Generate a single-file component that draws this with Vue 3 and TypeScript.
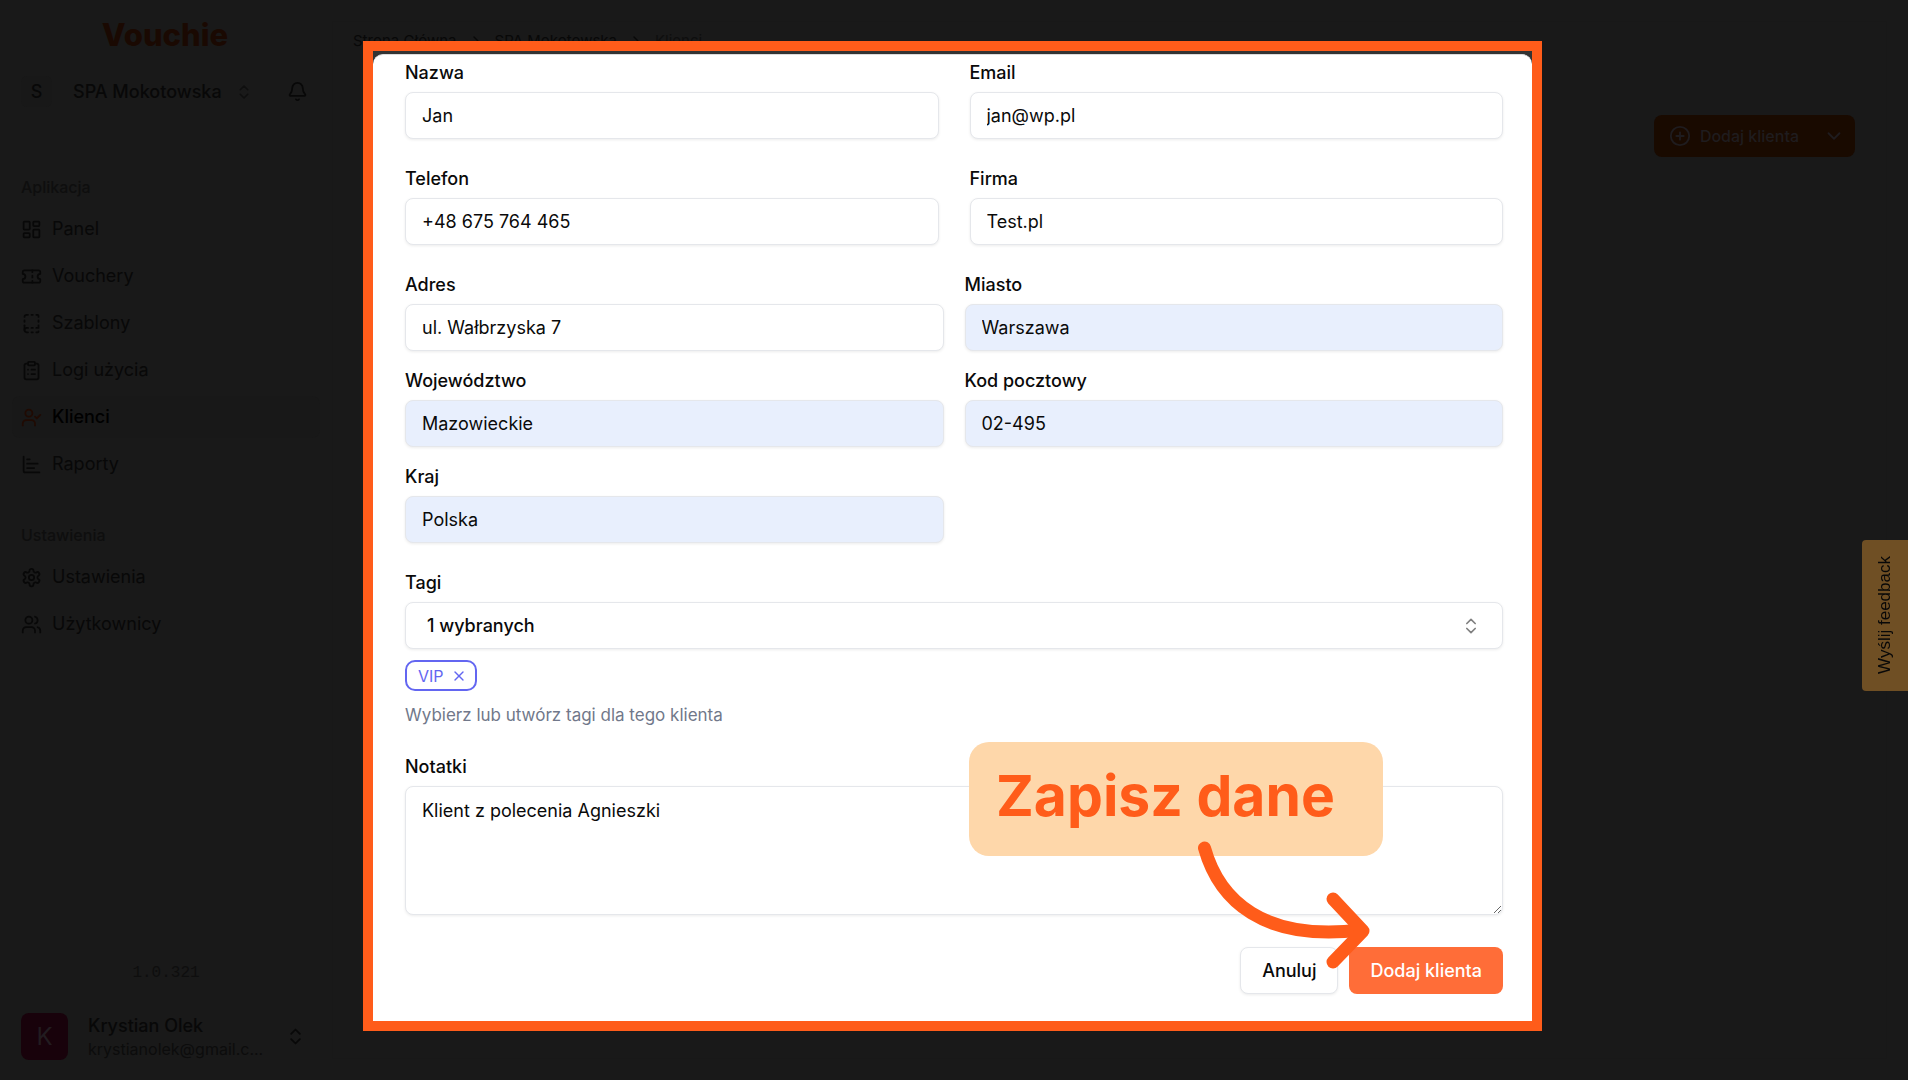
<script setup lang="ts">
import { ref } from 'vue'

interface NavItem {
  label: string
  paths: string[]
  active?: boolean
}

interface Field {
  id: string
  label: string
  value: string
  type?: string
  filled?: boolean
}

const appItems: NavItem[] = [
  {
    label: 'Panel',
    paths: [
      'M4 3h5a1 1 0 0 1 1 1v7a1 1 0 0 1-1 1H4a1 1 0 0 1-1-1V4a1 1 0 0 1 1-1z',
      'M15 3h5a1 1 0 0 1 1 1v3a1 1 0 0 1-1 1h-5a1 1 0 0 1-1-1V4a1 1 0 0 1 1-1z',
      'M15 12h5a1 1 0 0 1 1 1v7a1 1 0 0 1-1 1h-5a1 1 0 0 1-1-1v-7a1 1 0 0 1 1-1z',
      'M4 16h5a1 1 0 0 1 1 1v3a1 1 0 0 1-1 1H4a1 1 0 0 1-1-1v-3a1 1 0 0 1 1-1z',
    ],
  },
  {
    label: 'Vouchery',
    paths: [
      'M2 9a3 3 0 0 1 0 6v2a2 2 0 0 0 2 2h16a2 2 0 0 0 2-2v-2a3 3 0 0 1 0-6V7a2 2 0 0 0-2-2H4a2 2 0 0 0-2 2Z',
      'M13 5v2',
      'M13 17v2',
      'M13 11v2',
    ],
  },
  {
    label: 'Szablony',
    paths: [
      'M12 17h1.5', 'M12 22h1.5', 'M12 2h1.5', 'M17.5 22H19a1 1 0 0 0 1-1',
      'M17.5 2H19a1 1 0 0 1 1 1v1.5', 'M20 14v3h-2.5', 'M20 8.5V10', 'M4 10V8.5',
      'M4 19.5V14', 'M4 4.5A2.5 2.5 0 0 1 6.5 2H8', 'M8 22H6.5a1 1 0 0 1 0-5H8',
    ],
  },
  {
    label: 'Logi użycia',
    paths: [
      'M9 2h6a1 1 0 0 1 1 1v2a1 1 0 0 1-1 1H9a1 1 0 0 1-1-1V3a1 1 0 0 1 1-1z',
      'M16 4h2a2 2 0 0 1 2 2v14a2 2 0 0 1-2 2H6a2 2 0 0 1-2-2V6a2 2 0 0 1 2-2h2',
      'M12 11h4', 'M12 16h4', 'M8 11h.01', 'M8 16h.01',
    ],
  },
  {
    label: 'Klienci',
    active: true,
    paths: [
      'm16 11 2 2 4-4',
      'M16 21v-2a4 4 0 0 0-4-4H6a4 4 0 0 0-4 4v2',
      'M13 7a4 4 0 1 1-8 0a4 4 0 1 1 8 0',
    ],
  },
  {
    label: 'Raporty',
    paths: ['M3 3v16a2 2 0 0 0 2 2h16', 'M7 16h8', 'M7 11h12', 'M7 6h3'],
  },
]

const settingsItems: NavItem[] = [
  {
    label: 'Ustawienia',
    paths: [
      'M12.22 2h-.44a2 2 0 0 0-2 2v.18a2 2 0 0 1-1 1.73l-.43.25a2 2 0 0 1-2 0l-.15-.08a2 2 0 0 0-2.73.73l-.22.38a2 2 0 0 0 .73 2.73l.15.1a2 2 0 0 1 1 1.72v.51a2 2 0 0 1-1 1.74l-.15.09a2 2 0 0 0-.73 2.73l.22.38a2 2 0 0 0 2.73.73l.15-.08a2 2 0 0 1 2 0l.43.25a2 2 0 0 1 1 1.73V20a2 2 0 0 0 2 2h.44a2 2 0 0 0 2-2v-.18a2 2 0 0 1 1-1.73l.43-.25a2 2 0 0 1 2 0l.15.08a2 2 0 0 0 2.73-.73l.22-.39a2 2 0 0 0-.73-2.73l-.15-.08a2 2 0 0 1-1-1.74v-.5a2 2 0 0 1 1-1.74l.15-.09a2 2 0 0 0 .73-2.73l-.22-.38a2 2 0 0 0-2.73-.73l-.15.08a2 2 0 0 1-2 0l-.43-.25a2 2 0 0 1-1-1.73V4a2 2 0 0 0-2-2z',
      'M15 12a3 3 0 1 1-6 0a3 3 0 1 1 6 0',
    ],
  },
  {
    label: 'Użytkownicy',
    paths: [
      'M16 21v-2a4 4 0 0 0-4-4H6a4 4 0 0 0-4 4v2',
      'M13 7a4 4 0 1 1-8 0a4 4 0 1 1 8 0',
      'M22 21v-2a4 4 0 0 0-3-3.87',
      'M16 3.13a4 4 0 0 1 0 7.75',
    ],
  },
]

const groups = [
  { title: 'Aplikacja', items: appItems },
  { title: 'Ustawienia', items: settingsItems },
]

const contactFields = ref<Field[]>([
  { id: 'name', label: 'Nazwa', value: 'Jan' },
  { id: 'email', label: 'Email', value: 'jan@wp.pl', type: 'email' },
  { id: 'phone', label: 'Telefon', value: '+48 675 764 465', type: 'tel' },
  { id: 'company', label: 'Firma', value: 'Test.pl' },
])

const addressFields = ref<Field[]>([
  { id: 'street', label: 'Adres', value: 'ul. Wałbrzyska 7' },
  { id: 'city', label: 'Miasto', value: 'Warszawa', filled: true },
  { id: 'region', label: 'Województwo', value: 'Mazowieckie', filled: true },
  { id: 'postal', label: 'Kod pocztowy', value: '02-495', filled: true },
  { id: 'country', label: 'Kraj', value: 'Polska', filled: true },
])

const notes = ref('Klient z polecenia Agnieszki')
</script>

<template>
  <div class="app">
    <aside class="sidebar">
      <div class="logo">Vouchie</div>
      <div class="workspace">
        <button type="button" class="switcher">
          <span class="tile">S</span>
          <span class="name">SPA Mokotowska</span>
          <svg class="icon faint" width="18" height="18" viewBox="0 0 24 24"><path d="m7 15 5 5 5-5" /><path d="m7 9 5-5 5 5" /></svg>
        </button>
        <button type="button" class="bell" aria-label="Powiadomienia">
          <svg class="icon" width="21" height="21" viewBox="0 0 24 24"><path d="M10.268 21a2 2 0 0 0 3.464 0" /><path d="M3.262 15.326A1 1 0 0 0 4 17h16a1 1 0 0 0 .74-1.673C19.41 13.956 18 12.499 18 8A6 6 0 0 0 6 8c0 4.499-1.411 5.956-2.738 7.326" /></svg>
        </button>
      </div>

      <nav v-for="group in groups" :key="group.title" class="group">
        <h2>{{ group.title }}</h2>
        <a v-for="item in group.items" :key="item.label" href="#" :class="{ active: item.active }">
          <svg class="icon" width="21" height="21" viewBox="0 0 24 24">
            <path v-for="d in item.paths" :key="d" :d="d" />
          </svg>
          <span>{{ item.label }}</span>
        </a>
      </nav>

      <div class="version">1.0.321</div>
      <button type="button" class="account">
        <span class="avatar">K</span>
        <span class="who">
          <span class="person">Krystian Olek</span>
          <span class="mail">krystianolek@gmail.c...</span>
        </span>
        <svg class="icon" width="21" height="21" viewBox="0 0 24 24"><path d="m7 15 5 5 5-5" /><path d="m7 9 5-5 5 5" /></svg>
      </button>
    </aside>

    <main class="main">
      <div class="crumbs">
        <a href="#">Strona Główna</a>
        <svg class="icon" width="16" height="16" viewBox="0 0 24 24"><path d="m9 18 6-6-6-6" /></svg>
        <a href="#">SPA Mokotowska</a>
        <svg class="icon" width="16" height="16" viewBox="0 0 24 24"><path d="m9 18 6-6-6-6" /></svg>
        <span>Klienci</span>
      </div>
      <div class="toolbar">
        <button type="button" class="add">
          <svg class="icon" width="22" height="22" viewBox="0 0 24 24"><circle cx="12" cy="12" r="10" /><path d="M8 12h8" /><path d="M12 8v8" /></svg>
          <span>Dodaj klienta</span>
          <svg class="icon" width="22" height="22" viewBox="0 0 24 24"><path d="m6 9 6 6 6-6" /></svg>
        </button>
      </div>
    </main>

    <button type="button" class="feedback"><span>Wyślij feedback</span></button>

    <div class="overlay">
      <div class="frame">
        <form class="dialog" role="dialog" aria-label="Dodaj klienta" @submit.prevent>
          <div class="grid contact">
            <div v-for="field in contactFields" :key="field.id" class="field">
              <label :for="field.id">{{ field.label }}</label>
              <input :id="field.id" v-model="field.value" class="control" :type="field.type ?? 'text'" />
            </div>
          </div>

          <div class="grid address">
            <div v-for="field in addressFields" :key="field.id" class="field">
              <label :for="field.id">{{ field.label }}</label>
              <input :id="field.id" v-model="field.value" class="control" :class="{ filled: field.filled }" type="text" />
            </div>
          </div>

          <div class="field">
            <label for="tags">Tagi</label>
            <div class="select">
              <select id="tags" class="control">
                <option>1 wybranych</option>
              </select>
              <svg class="icon" width="20" height="20" viewBox="0 0 24 24"><path d="m7 15 5 5 5-5" /><path d="m7 9 5-5 5 5" /></svg>
            </div>
            <div class="tags">
              <button type="button" class="tag">
                VIP
                <svg class="icon" width="16" height="16" viewBox="0 0 24 24"><path d="M18 6 6 18" /><path d="m6 6 12 12" /></svg>
              </button>
            </div>
            <p class="hint">Wybierz lub utwórz tagi dla tego klienta</p>
          </div>

          <div class="field">
            <label for="notes">Notatki</label>
            <textarea id="notes" v-model="notes" class="control" spellcheck="false"></textarea>
          </div>

          <div class="actions">
            <button type="button" class="cancel">Anuluj</button>
            <button type="submit" class="submit">Dodaj klienta</button>
          </div>
        </form>

        <div class="callout">Zapisz dane</div>
        <svg class="arrow" width="180" height="136" viewBox="1194 838 180 136">
          <path d="M1204.5 848C1219 900 1263 942 1361 930" />
          <path d="M1333 899L1363 931L1333 962" />
        </svg>
      </div>
    </div>
  </div>
</template>

<style>
body {
  margin: 0;
  background: #191919;
}
</style>

<style scoped>
.app {
  display: flex;
  min-height: 100vh;
  background: #191919;
  color: #080808;
  font-family: Inter, "Noto Sans", sans-serif;
  font-size: 18px;
  line-height: 24px;
}

.app *,
.app *::before {
  box-sizing: border-box;
}

button,
input,
select,
textarea {
  font: inherit;
  color: inherit;
  margin: 0;
}

button {
  padding: 0;
  border: 0;
  background: none;
  text-align: left;
}

a {
  color: inherit;
  text-decoration: none;
}

.icon {
  flex: none;
  fill: none;
  stroke: currentColor;
  stroke-width: 2;
  stroke-linecap: round;
  stroke-linejoin: round;
}

.sidebar {
  display: flex;
  flex-direction: column;
  flex: none;
  width: 332px;
  padding: 16px 12px 20px;
}

.logo {
  height: 36px;
  padding-right: 2px;
  color: #1a0902;
  font-size: 31px;
  font-weight: 800;
  line-height: 38px;
  text-align: center;
}

.workspace {
  display: flex;
  align-items: center;
  gap: 34px;
  padding: 24px 9px 0;
}

.switcher {
  display: flex;
  align-items: center;
  gap: 21px;
  font-weight: 500;
}

.switcher .icon {
  margin-left: -8px;
}

.faint {
  opacity: 0.6;
}

.tile {
  display: grid;
  place-items: center;
  width: 31px;
  height: 31px;
  border-radius: 6px;
  background: #181818;
}

.bell {
  display: flex;
}

.group {
  display: flex;
  flex-direction: column;
  gap: 5px;
  margin-top: 39px;
}

.workspace + .group {
  margin-top: 69px;
}

.group h2 {
  margin: 0 0 5px;
  padding: 0 9px;
  color: #0e0e0e;
  font-size: 16px;
  font-weight: 500;
  line-height: 22px;
}

.group a {
  display: flex;
  align-items: center;
  gap: 10px;
  height: 42px;
  padding: 0 9px;
  border-radius: 8px;
}

.group a.active {
  background: #181818;
  color: #000;
  font-weight: 500;
}

.group a.active .icon {
  color: #200a02;
}

.version {
  margin-top: auto;
  color: #0e0e0e;
  font-family: "Liberation Mono", monospace;
  font-size: 16px;
  text-align: center;
}

.account {
  display: flex;
  align-items: center;
  margin: 28px 9px 0;
}

.avatar {
  display: grid;
  flex: none;
  place-items: center;
  width: 47px;
  height: 47px;
  border-radius: 8px;
  background: #18020b;
  color: #221c20;
  font-size: 24px;
}

.who {
  display: flex;
  flex-direction: column;
  width: 177px;
  margin: 0 20px;
}

.person {
  font-weight: 500;
}

.mail {
  color: #0c0c0c;
  font-size: 16px;
  line-height: 22px;
  white-space: nowrap;
}

.main {
  flex: 1;
  margin: 21px 21px 21px 0;
  border: 1px solid #181818;
}

.crumbs {
  display: flex;
  align-items: center;
  gap: 11px;
  height: 38px;
  padding-left: 20px;
  font-size: 15px;
}

.crumbs span {
  color: #0e0e0e;
}

.toolbar {
  display: flex;
  justify-content: flex-end;
  padding: 55px 31px 0 0;
}

.add {
  display: flex;
  align-items: center;
  height: 42px;
  padding: 0 10px 0 15px;
  border-radius: 8px;
  background: #190a00;
  color: #1f1c1e;
  font-size: 16px;
  font-weight: 500;
}

.add span {
  margin: 0 24px 0 9px;
}

.feedback {
  position: fixed;
  top: 540px;
  right: 0;
  width: 46px;
  height: 151px;
  border-radius: 4px 0 0 4px;
  background: #6f4f24;
  color: #080808;
  font-family: "Liberation Sans", Arial, sans-serif;
  font-size: 17px;
}

.feedback span {
  display: block;
  width: 46px;
  height: 151px;
  line-height: 46px;
  text-align: center;
  writing-mode: vertical-rl;
  transform: rotate(180deg);
}

.overlay {
  position: absolute;
  inset: 0;
  display: flex;
  align-items: flex-start;
  justify-content: center;
  padding: 41px 3px 0 0;
  pointer-events: none;
}

.frame {
  position: relative;
  width: 1179px;
  max-width: calc(100% - 48px);
  padding-top: 3px;
  border: 10px solid #ff5c1a;
  background: #333;
  pointer-events: auto;
}

.dialog {
  display: flex;
  flex-direction: column;
  gap: 28px;
  padding: 6px 29px 27px 32px;
  border-top: 1px solid #ddd;
  border-radius: 10px 10px 0 0;
  background: #fff;
  color: #0a0a0a;
}

.grid {
  display: grid;
  grid-template-columns: 1fr 1fr;
}

.contact {
  gap: 28px 31px;
}

.address {
  gap: 18px 21px;
}

.field {
  display: flex;
  flex-direction: column;
  min-width: 0;
}

.field label {
  margin-bottom: 7px;
  font-weight: 500;
}

.control {
  width: 100%;
  height: 47px;
  padding: 0 16px;
  border: 1px solid #e5e7eb;
  border-radius: 8px;
  outline: 0;
  background: #fff;
  box-shadow: 0 1px 3px rgba(0, 0, 0, 0.08);
}

.control.filled {
  background: #e8effd;
}

.select {
  position: relative;
}

.select .control {
  display: block;
  padding: 0 21px;
  appearance: none;
  font-weight: 500;
}

.select .icon {
  position: absolute;
  top: 14px;
  right: 22px;
  color: #808080;
  pointer-events: none;
}

.tags {
  display: flex;
  margin: 11px 0 12px;
}

.tag {
  display: flex;
  align-items: center;
  gap: 7px;
  height: 31px;
  padding: 0 8px 0 11px;
  border: 2px solid #6366f1;
  border-radius: 10px;
  color: #6366f1;
  font-size: 16px;
}

.hint {
  margin: 0;
  color: #71788a;
  font-size: 17px;
}

textarea.control {
  display: block;
  height: 129px;
  padding: 12px 16px;
  resize: vertical;
}

.actions {
  display: flex;
  justify-content: flex-end;
  gap: 11px;
  margin-top: 4px;
}

.actions button {
  height: 47px;
  padding: 0 21px;
  border-radius: 8px;
  font-weight: 500;
}

.cancel {
  border: 1px solid #e5e7eb;
  background: #fff;
  box-shadow: 0 1px 3px rgba(0, 0, 0, 0.08);
}

.submit {
  background: #ff6d38;
  color: #fff;
}

.callout {
  position: absolute;
  right: 149px;
  bottom: 165px;
  width: 414px;
  height: 114px;
  padding-left: 27px;
  border-radius: 20px;
  background: #fed7aa;
  color: #ff5c1a;
  font-size: 57px;
  font-weight: 700;
  line-height: 107px;
  white-space: nowrap;
}

.arrow {
  position: absolute;
  right: 158px;
  bottom: 47px;
  fill: none;
  stroke: #ff5c1a;
  stroke-width: 13;
  stroke-linecap: round;
  stroke-linejoin: round;
}
</style>
